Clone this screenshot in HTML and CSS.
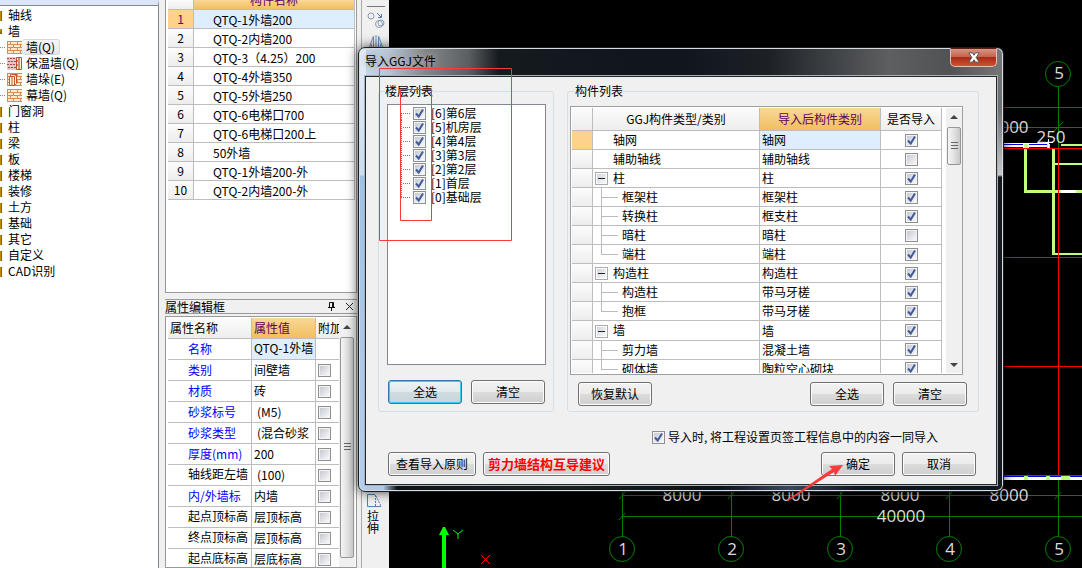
FILE: index.html
```html
<!DOCTYPE html>
<html lang="zh-CN">
<head>
<meta charset="utf-8">
<title>导入GGJ文件</title>
<link rel="stylesheet" href="styles.css">
</head>
<body>
<svg class="defs" aria-hidden="true">
  <symbol id="brick" viewBox="0 0 15 15">
    <path fill="#fdebd5" d="M0 1h15v13H0z"/>
    <path fill="none" stroke="#d98a4e" d="M0 1.500h15M0 4.500h15M0 7.500h15M0 10.500h15M0 13.500h15M3.500 2v2M10.500 2v2M6.500 5v2M13.500 5v2M3.500 8v2M10.500 8v2M6.500 11v2M13.500 11v2M.5 1v13"/>
  </symbol>
</svg>
<main class="workspace">
  <nav class="nav-panel">
    <ul class="tree">
      <li class="folder">轴线</li>
      <li class="folder open">墙
        <ul>
          <li class="leaf"><svg class="icon"><use href="#brick"/></svg><span class="leaf-name picked">墙(Q)</span></li>
          <li class="leaf"><svg class="icon" viewBox="0 0 15 15"><path fill="#e8c4c4" d="M0 1h9v13H0z"/><path stroke="#a04848" stroke-dasharray="2 1" d="M0 2.500h8M1 5.500h8M0 8.500h8M1 11.500h8"/><path fill="#fff0e0" stroke="#c0502a" d="M9.500 1.500h5v12h-5z"/><path stroke="#a0301a" d="M12 1v13M9 5h2M9 9h2"/></svg><span class="leaf-name">保温墙(Q)</span></li>
          <li class="leaf"><svg class="icon"><use href="#brick"/><path fill="#fff4e8" stroke="#c8542a" d="M2.500 4.500l2-2h5v9l-2 2h-5zM7.500 13V4.500l2-2M2.500 4.500h5M5 5v8"/></svg><span class="leaf-name">墙垛(E)</span></li>
          <li class="leaf"><svg class="icon"><use href="#brick"/></svg><span class="leaf-name">幕墙(Q)</span></li>
        </ul>
      </li>
      <li class="folder">门窗洞</li>
      <li class="folder">柱</li>
      <li class="folder">梁</li>
      <li class="folder">板</li>
      <li class="folder">楼梯</li>
      <li class="folder">装修</li>
      <li class="folder">土方</li>
      <li class="folder">基础</li>
      <li class="folder">其它</li>
      <li class="folder">自定义</li>
      <li class="folder">CAD识别</li>
    </ul>
  </nav>

  <section class="side">
    <div class="members">
      <table class="grid member-grid">
        <colgroup><col class="c-num"><col></colgroup>
        <thead><tr><th></th><th class="hot">构件名称</th></tr></thead>
        <tbody>
          <tr class="current"><th>1</th><td>QTQ-1外墙200</td></tr>
          <tr><th>2</th><td>QTQ-2内墙200</td></tr>
          <tr><th>3</th><td>QTQ-3（4.25）200</td></tr>
          <tr><th>4</th><td>QTQ-4外墙350</td></tr>
          <tr><th>5</th><td>QTQ-5外墙250</td></tr>
          <tr><th>6</th><td>QTQ-6电梯口700</td></tr>
          <tr><th>7</th><td>QTQ-6电梯口200上</td></tr>
          <tr><th>8</th><td>50外墙</td></tr>
          <tr><th>9</th><td>QTQ-1外墙200-外</td></tr>
          <tr><th>10</th><td>QTQ-2内墙200-外</td></tr>
        </tbody>
      </table>
    </div>
    <header class="props-title">
      <h2>属性编辑框</h2>
      <button class="tiny" aria-label="固定"><svg width="9" height="9" viewBox="0 0 9 9"><path fill="none" stroke="#111" d="M2.500 5V.5h4V5M1 5.500h7M4.500 6v3M5.500 1v4"/></svg></button>
      <button class="tiny" aria-label="关闭"><svg width="9" height="9" viewBox="0 0 9 9"><path stroke="#222" d="M1 1l7 7M8 1L1 8"/></svg></button>
    </header>
    <div class="props">
      <table class="grid prop-grid">
        <colgroup><col class="c-name"><col class="c-value"><col class="c-add"></colgroup>
        <thead><tr><th>属性名称</th><th class="hot">属性值</th><th>附加</th></tr></thead>
        <tbody>
          <tr class="current"><td class="key">名称</td><td>QTQ-1外墙</td><td></td></tr>
          <tr><td class="key">类别</td><td>间壁墙</td><td><input type="checkbox" aria-label="类别"></td></tr>
          <tr><td class="key">材质</td><td>砖</td><td><input type="checkbox" aria-label="材质"></td></tr>
          <tr><td class="key">砂浆标号</td><td class="paren">(M5)</td><td><input type="checkbox" aria-label="砂浆标号"></td></tr>
          <tr><td class="key">砂浆类型</td><td class="paren">(混合砂浆</td><td><input type="checkbox" aria-label="砂浆类型"></td></tr>
          <tr><td class="key">厚度(mm)</td><td>200</td><td><input type="checkbox" aria-label="厚度"></td></tr>
          <tr><td class="key plain">轴线距左墙</td><td class="paren">(100)</td><td><input type="checkbox" aria-label="轴线距左墙"></td></tr>
          <tr><td class="key">内/外墙标</td><td>内墙</td><td><input type="checkbox" aria-label="内外墙标志"></td></tr>
          <tr><td class="key plain">起点顶标高</td><td>层顶标高</td><td><input type="checkbox" aria-label="起点顶标高"></td></tr>
          <tr><td class="key plain">终点顶标高</td><td>层顶标高</td><td><input type="checkbox" aria-label="终点顶标高"></td></tr>
          <tr><td class="key plain">起点底标高</td><td>层底标高</td><td><input type="checkbox" aria-label="起点底标高"></td></tr>
        </tbody>
      </table>
      <div class="scroll props-scroll"><i class="up"></i><b class="thumb"></b></div>
    </div>
  </section>

  <aside class="toolstrip">
    <svg class="tool" viewBox="0 0 18 17"><g fill="none" stroke="#8c9bb4"><circle cx="4" cy="4" r="3"/><circle cx="12" cy="12" r="3.500"/><circle cx="14" cy="11" r="3"/></g><path fill="none" stroke="#5577b0" d="M10 1l4 4M14.500 2v3.500H11"/></svg>
    <svg class="tool mirror" viewBox="0 0 18 17"><path fill="none" stroke="#6d8fc4" d="M6.500 1L1 16h5.500zM11.500 1L17 16h-5.500zM9 0v17M4 9l2 7M14 9l-2 7"/></svg>
    <button class="stretch"><svg width="15" height="13" viewBox="0 0 15 13"><path fill="none" stroke="#557db5" d="M8 .5H.5v12H14"/><path fill="none" stroke="#557db5" stroke-dasharray="2 1" d="M8.500 1v11M9 2l5 10"/></svg>拉<br>伸</button>
  </aside>

  <section class="canvas">
    <svg viewBox="389 0 693 568" preserveAspectRatio="xMinYMin slice">
      <g stroke="#008000" fill="none">
        <path d="M1003 107.500h79M1003 127.500h79M1058.500 87v61M1053 132l10-10"/>
        <path d="M622 495.500h460M622 516.500h460M622.500 489v47M731.500 489v47M840.500 489v47M949.500 489v47M1058.500 476v60"/>
        <path d="M619 499l6-7M619 520l6-7M728 499l6-7M837 499l6-7M946 499l6-7M1055 499l6-7"/>
        <circle cx="1058" cy="74" r="12.500"/>
        <circle cx="622" cy="549" r="12.500"/><circle cx="731" cy="549" r="12.500"/><circle cx="840" cy="549" r="12.500"/><circle cx="949" cy="549" r="12.500"/><circle cx="1058" cy="549" r="12.500"/>
      </g>
      <g fill="#dcdcdc" class="cad-text">
        <text x="1059" y="79">5</text>
        <text x="1014" y="133">000</text><text x="1051" y="143">250</text>
        <text x="623" y="555">1</text><text x="732" y="555">2</text><text x="841" y="555">3</text><text x="950" y="555">4</text><text x="1059" y="555">5</text>
        <text x="682" y="501">8000</text><text x="791" y="501">8000</text><text x="900" y="501">8000</text><text x="1009" y="501">8000</text>
        <text x="901" y="522">40000</text>
      </g>
      <path fill="#fff" d="M1003 143h46v5h-46zM1004 476h78v4h-78z"/>
      <path stroke="#0000e0" d="M1003 144.500h20M1003 147.500h20M1029 144.500h18M1029 147.500h18M1004 476.500h78"/>
      <path fill="#bfff7f" d="M1024 144h4v4h-4zM1047 144h3v4h-3zM1024 149h3v43h-3zM1024 190h37v3h-37zM1052 149h3v106h-3zM1052 253h30v2h-30zM1055 163h27v2h-27zM1061 144h21v2h-21zM1076 190h6v3h-6zM1024 476h4v4h-4zM1046 476h4v4h-4zM1061 476h9v4h-9z"/>
      <path fill="#fff" d="M1061 190h15v3h-15z"/>
      <path stroke="#fff" d="M1048.500 139v9M1045 142.500h8"/>
      <path stroke="#f00" d="M1003 148.500h79M1003 257.500h79M1003 366.500h79M1003 475.500h79M1058.500 148v328" fill="none"/>
      <path fill="#0f0" d="M442 568v-46h-3l4-8h2l4 8h-3v46z" transform="translate(0 13)"/>
      <path stroke="#0f0" fill="none" d="M453 530l5 4 5-4M458 534v5"/>
      <path stroke="#f00" d="M481 555l9 9M490 555l-9 9"/>
    </svg>
  </section>
</main>

<div class="dialog" role="dialog" aria-label="导入GGJ文件">
  <header class="titlebar"><h1>导入GGJ文件</h1>
    <button class="close" aria-label="关闭窗口"><svg width="12" height="11" viewBox="0 0 12 11"><path fill="#fff" stroke="#555" d="M.8.8h3.600L6 3.200 7.600.8h3.600L8.200 5.500l3 4.700H7.600L6 7.800l-1.600 2.400H.8l3-4.700z"/></svg></button>
  </header>
  <form class="client" onsubmit="return false">
    <div class="groups">
      <fieldset class="floors">
        <legend>楼层列表</legend>
        <div class="floor-list">
          <label><input type="checkbox" checked>[6]第6层</label>
          <label><input type="checkbox" checked>[5]机房层</label>
          <label><input type="checkbox" checked>[4]第4层</label>
          <label><input type="checkbox" checked>[3]第3层</label>
          <label><input type="checkbox" checked>[2]第2层</label>
          <label><input type="checkbox" checked>[1]首层</label>
          <label><input type="checkbox" checked>[0]基础层</label>
        </div>
        <div class="buttons"><button class="btn focus">全选</button><button class="btn">清空</button></div>
      </fieldset>
      <fieldset class="parts">
        <legend>构件列表</legend>
        <div class="parts-box">
          <div class="parts-view">
            <table class="grid parts-grid">
              <colgroup><col class="c-mark"><col><col class="c-target"><col class="c-flag"></colgroup>
              <thead><tr><th></th><th>GGJ构件类型/类别</th><th class="hot">导入后构件类别</th><th>是否导入</th></tr></thead>
              <tbody>
                <tr class="current"><th></th><td class="root">轴网</td><td>轴网</td><td><input type="checkbox" aria-label="轴网" checked></td></tr>
                <tr><th></th><td class="root">辅助轴线</td><td>辅助轴线</td><td><input type="checkbox" aria-label="辅助轴线"></td></tr>
                <tr><th></th><td class="parent"><button class="fold" aria-label="折叠"></button>柱</td><td>柱</td><td><input type="checkbox" aria-label="柱" checked></td></tr>
                <tr><th></th><td class="child">框架柱</td><td>框架柱</td><td><input type="checkbox" aria-label="框架柱" checked></td></tr>
                <tr><th></th><td class="child">转换柱</td><td>框支柱</td><td><input type="checkbox" aria-label="转换柱" checked></td></tr>
                <tr><th></th><td class="child">暗柱</td><td>暗柱</td><td><input type="checkbox" aria-label="暗柱"></td></tr>
                <tr><th></th><td class="child last">端柱</td><td>端柱</td><td><input type="checkbox" aria-label="端柱" checked></td></tr>
                <tr><th></th><td class="parent"><button class="fold" aria-label="折叠"></button>构造柱</td><td>构造柱</td><td><input type="checkbox" aria-label="构造柱组" checked></td></tr>
                <tr><th></th><td class="child">构造柱</td><td>带马牙槎</td><td><input type="checkbox" aria-label="构造柱" checked></td></tr>
                <tr><th></th><td class="child last">抱框</td><td>带马牙槎</td><td><input type="checkbox" aria-label="抱框" checked></td></tr>
                <tr><th></th><td class="parent"><button class="fold" aria-label="折叠"></button>墙</td><td>墙</td><td><input type="checkbox" aria-label="墙" checked></td></tr>
                <tr><th></th><td class="child">剪力墙</td><td>混凝土墙</td><td><input type="checkbox" aria-label="剪力墙" checked></td></tr>
                <tr><th></th><td class="child last">砌体墙</td><td>陶粒空心砌块</td><td><input type="checkbox" aria-label="砌体墙" checked></td></tr>
              </tbody>
            </table>
          </div>
          <div class="scroll"><i class="up"></i><b class="thumb short"></b><i class="down"></i></div>
        </div>
        <div class="buttons"><button class="btn first">恢复默认</button><button class="btn">全选</button><button class="btn">清空</button></div>
      </fieldset>
    </div>
    <label class="option"><input type="checkbox" checked>导入时, 将工程设置页签工程信息中的内容一同导入</label>
    <footer class="actions">
      <button class="btn wide">查看导入原则</button>
      <button class="btn advice">剪力墙结构互导建议</button>
      <button class="btn ok">确定</button>
      <button class="btn">取消</button>
    </footer>
  </form>
</div>

<svg class="marks" aria-hidden="true">
  <path fill="none" stroke="#f83a3a" d="M379.500 68.500h132v172h-132zM400.500 89.500h31v131h-31z"/>
  <path fill="#f83a3a" d="M787 500l45-31-3-3 14-1-8 11-1-4-46 29z"/>
</svg>
</body>
</html>
```

FILE: styles.css
```css
* { box-sizing: border-box; }
html, body { height: 100%; }
body {
  margin: 0;
  overflow: hidden;
  background: #f0f0f0;
  color: #000;
  font: 12px/16px "Noto Sans CJK SC", sans-serif;
}
button, input { font: inherit; margin: 0; }
h1, h2, ul { margin: 0; padding: 0; font-size: 12px; font-weight: 400; list-style: none; }
.defs { position: absolute; width: 0; height: 0; }

.workspace { display: flex; height: 100vh; }

/* component tree */
.nav-panel {
  flex: none;
  width: 159px;
  border-top: 5px solid #dce6f8;
  border-right: 1px solid #808890;
  background: #fff;
}
.tree { border-top: 1px solid #808890; padding-top: 1px; }
.folder {
  padding-left: 8px;
  background: linear-gradient(90deg, #d8a018, #6e4c00) 0 4px / 2px 10px no-repeat;
}
.folder.open { background: linear-gradient(135deg, #d8a018, #6e4c00) 0 6px / 2px 5px no-repeat; }
.folder ul { margin-left: -8px; }
.leaf {
  display: flex;
  align-items: center;
  height: 16px;
  padding-left: 7px;
  background: repeating-linear-gradient(90deg, #888 0 1px, #fff 1px 2px) 0 8px / 6px 1px no-repeat;
}
.icon { width: 15px; height: 15px; flex: none; }
.leaf-name { padding: 0 4px; line-height: 14px; }
.picked { border: 1px solid #d8d8d8; border-left: 0; border-radius: 3px; background: linear-gradient(#f8f8f8, #e6e6e6); }

/* middle column */
.side {
  flex: none;
  width: 192px;
  margin-left: 6px;
  display: flex;
  flex-direction: column;
}
.members { flex: none; height: 293px; padding: 0 1px 0 2px; border: 1px solid #9a9a9a; border-top: 0; background: #fff; }
.grid { width: 100%; table-layout: fixed; border-collapse: separate; border-spacing: 0; }
.grid th, .grid td {
  padding: 0;
  border: solid #bdbdbd;
  border-width: 0 1px 1px 0;
  font-weight: 400;
  line-height: 18px;
  white-space: nowrap;
  overflow: hidden;
}
.grid th { background: linear-gradient(#fcfcfc, #ededed); }
.grid .hot { background: linear-gradient(#f9d796, #f1bf60); color: #600060; }
.grid .current th { background: #ffd28c; color: #600060; }
.member-grid .current td, .prop-grid .current td:nth-child(2), .parts-grid .current td:nth-child(3) { background: #dfeeff; }
.c-num { width: 26px; }
.member-grid thead th { height: 10px; padding-bottom: 9px; line-height: 0; }
.member-grid tbody td { padding: 1px 0 0 19px; line-height: 17px; }

.props-title {
  display: flex;
  align-items: center;
  gap: 9px;
  margin-top: 6px;
  height: 15px;
  padding-right: 3px;
  border: solid #999;
  border-width: 1px 0;
}
.props-title h2 { flex: 1; line-height: 13px; }
.tiny { display: flex; padding: 0; border: 0; background: none; }
.props { display: flex; flex: 1; min-height: 0; margin-top: 2px; padding: 1px 1px 0 2px; border: 1px solid #999; background: #fff; overflow: hidden; }
.prop-grid { flex: 1; min-width: 0; width: 171px; align-self: flex-start; }
.c-name { width: 84px; }
.c-value { width: 64px; }
.prop-grid th, .prop-grid td { line-height: 20px; padding-left: 2px; text-align: left; }
.prop-grid th:last-child, .prop-grid td:last-child { border-right: 0; }
.prop-grid .key { padding-left: 20px; color: #00f; }
.prop-grid .key.plain { color: #000; line-height: 18px; padding-bottom: 2px; }
.prop-grid .paren { padding-left: 5px; }
.prop-grid .current td:nth-child(2) { line-height: 18px; padding-bottom: 2px; }

input[type="checkbox"] {
  appearance: none;
  flex: none;
  display: block;
  width: 13px;
  height: 13px;
  border: 1px solid #8e8f8f;
  background: linear-gradient(135deg, #c5cad2, #f8f8f8) center / 9px 9px no-repeat #f4f4f4;
}
input[type="checkbox"]:checked {
  background:
    url("data:image/svg+xml,%3Csvg xmlns='http://www.w3.org/2000/svg' viewBox='0 0 11 11'%3E%3Cpath d='M2 5.500l2.700 3L9 1.500' fill='none' stroke='%23405a9c' stroke-width='2'/%3E%3C/svg%3E") center / 11px 11px no-repeat,
    linear-gradient(135deg, #c5cad2, #f8f8f8) center / 9px 9px no-repeat #f4f4f4;
}

.scroll {
  flex: none;
  width: 16px;
  display: flex;
  flex-direction: column;
  align-items: center;
  background: #f0f0f0;
}
.up, .down { width: 0; height: 0; border: 4px solid transparent; }
.up { border-top: 0; border-bottom-color: #444; margin: 7px 0 8px; }
.down { border-bottom: 0; border-top-color: #444; margin: auto 0 6px; }
.thumb {
  width: 14px;
  height: 221px;
  border: 1px solid #979797;
  border-radius: 2px;
  background:
    repeating-linear-gradient(#666 0 1px, transparent 1px 3px) center / 7px 9px no-repeat,
    linear-gradient(90deg, #f5f5f5, #e2e2e2 50%, #c8c8cc);
}
.thumb.short { height: 38px; }

/* vertical tool strip */
.toolstrip {
  flex: none;
  width: 28px;
  margin-left: 4px;
  padding: 6px 5px 0;
  display: flex;
  flex-direction: column;
  border-left: 1px solid #aaa;
}
.tool { width: 18px; height: 17px; }
.tool:first-child { box-sizing: content-box; border-top: 1px solid #777; padding-top: 5px; }
.tool.mirror { margin-top: 6px; }
.stretch { margin-top: 442px; padding: 0; border: 0; background: none; line-height: 12px; text-align: left; }
.stretch svg { display: block; margin-bottom: 3px; }

/* drawing area */
.canvas { flex: 1; min-width: 0; background: #000; }
.canvas svg { display: block; width: 100%; height: 100%; }
.cad-text { font: 17px "Open Sans", sans-serif; text-anchor: middle; }

/* import window */
.dialog {
  position: absolute;
  left: 358px;
  right: 78px;
  top: 47px;
  padding: 0 6px 6px;
  border: 1px solid #1b1f24;
  border-radius: 7px;
  box-shadow: inset 0 0 0 1px #d5dde2, 0 0 12px rgba(0, 0, 0, .75);
  background:
    linear-gradient(#e4ecf5, #cadcf0 127px, #9dc2e8 128px, #b3cfee) 0 0 / 7px 100% no-repeat,
    linear-gradient(#777, #707070 60px, #c8c8c8 127px, #16191e 129px, #16191e) 100% 0 / 7px 100% no-repeat,
    linear-gradient(90deg, #c9dcf1, #b6c6d6 30px, #85898b 65px, #5a5e60 110px, #151a1f 140px, #10151e 320px, #1d2126 410px, #5d5f60 530px, #505254 590px, #777) 0 0 / 100% 30px no-repeat,
    linear-gradient(90deg, #adcaea 24px, #0f1318 38px, #182019 210px, #0d1116 360px, #39475c 430px, #10151b 500px);
}
.titlebar { display: flex; align-items: flex-start; height: 28px; }
.titlebar h1 {
  flex: 1;
  padding-top: 5px;
  text-shadow: 0 0 4px #aaa, 0 0 8px #aaa;
}
.close {
  display: flex;
  justify-content: center;
  align-items: center;
  width: 47px;
  height: 19px;
  padding: 0 0 1px;
  border: 1px solid #e0c0b8;
  border-top-color: #5a2018;
  border-radius: 0 0 5px 5px;
  background: linear-gradient(#d99585, #c4614d 48%, #a92b14 50%, #cc5335);
}
.client {
  padding: 6px 17px 8px 12px;
  border: 1px solid #22282e;
  box-shadow: 0 0 0 1px #a8b0b8;
  background: #f0f0f0;
}
.groups { display: flex; gap: 13px; }
fieldset {
  min-width: 0;
  margin: 0;
  padding: 5px 8px;
  border: 1px solid #d5dfe5;
  border-radius: 3px;
}
legend { padding: 0; line-height: 16px; margin-left: -2px; }
.floors { flex: none; width: 176px; padding-right: 7px; }
.floor-list {
  height: 261px;
  padding: 1px 0 0 13px;
  border: 1px solid #828790;
  background: #fff;
}
.floor-list label {
  display: flex;
  align-items: center;
  gap: 5px;
  height: 14px;
  padding-left: 12px;
  background:
    repeating-linear-gradient(#777 0 1px, #fff 1px 2px) 0 0 / 1px 14px no-repeat,
    repeating-linear-gradient(90deg, #777 0 1px, #fff 1px 2px) 0 7px / 10px 1px no-repeat;
}
.floor-list label:first-child { background-position: 0 7px, 0 7px; }
.floor-list label:last-child { background-size: 1px 7px, 10px 1px; }
.buttons { display: flex; gap: 9px; margin-top: 15px; }
.btn {
  flex: none;
  width: 74px;
  height: 24px;
  padding: 0;
  border: 1px solid #707070;
  border-radius: 3px;
  box-shadow: inset 0 0 0 1px #fcfcfc;
  background: linear-gradient(#f2f2f2, #ebebeb 50%, #dcdcdc 50%, #cfcfcf);
  line-height: 20px;
}
.btn.focus { border-color: #2f7bab; box-shadow: inset 0 0 0 1px #3cc8f4; background: linear-gradient(#edf3f6, #e1e9ed 50%, #cfdce2 50%, #c8d4da); }
.floors .btn { margin-left: 1px; }
.floors .buttons { gap: 8px; }

.parts { flex: 1; padding: 7px 11px 5px 2px; }
.parts legend { margin-left: 5px; }
.parts-box {
  display: flex;
  margin-right: 4px;
  height: 269px;
  padding: 1px 0 1px 1px;
  border: 1px solid #a0a0a0;
  background: #fff;
}
.parts-view { flex: 1; min-width: 0; margin-right: 4px; overflow: hidden; }
.c-mark { width: 21px; }
.c-target { width: 121px; }
.c-flag { width: 61px; }
.parts-grid thead th { line-height: 22px; }
.parts-grid td:nth-child(3) { padding-left: 2px; line-height: 17px; padding-bottom: 1px; }
.parts-grid td input { margin: 0 auto; }
.parts-grid .root { padding-left: 20px; }
.parts-grid .parent { padding-left: 2px; }
.parts-grid .child {
  padding-left: 29px;
  background:
    linear-gradient(#bbb, #bbb) 8px 0 / 1px 100% no-repeat,
    linear-gradient(#bbb, #bbb) 8px 9px / 17px 1px no-repeat;
}
.parts-grid .last { background-size: 1px 10px, 17px 1px; }
.fold {
  width: 13px;
  height: 13px;
  margin: 0 5px 2px 0;
  padding: 0;
  vertical-align: middle;
  border: 1px solid #aaa;
  background:
    linear-gradient(#222, #222) center / 7px 1px no-repeat,
    linear-gradient(135deg, #d0d6df, #f8f8f8) center / 9px 9px no-repeat #fff;
}
.parts .buttons { margin-top: 7px; padding-left: 8px; }
.parts .first { margin-right: auto; }

.option { display: flex; justify-content: flex-end; align-items: center; gap: 3px; margin: 17px 41px 0 0; }
.actions { display: flex; gap: 7px; margin: 7px 3px 0 10px; }
.wide { width: 88px; }
.advice { width: 127px; color: #f00; font-size: 13px; font-weight: 700; }
.actions .ok { margin-left: auto; }

.marks { position: absolute; left: 0; top: 0; width: 100%; height: 100%; pointer-events: none; }
```
